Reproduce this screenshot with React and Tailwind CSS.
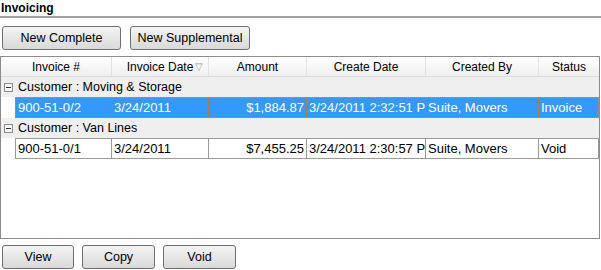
import React from 'react';

const COLS = [
    { key: 'invoice', label: 'Invoice #', w: 'w-[111px]', dw: 'w-[96px]', align: 'text-left' },
    { key: 'date', label: 'Invoice Date', w: 'w-[97px]', dw: 'w-[97px]', align: 'text-left', sort: true },
    { key: 'amount', label: 'Amount', w: 'w-[98px]', dw: 'w-[98px]', align: 'text-right' },
    { key: 'created', label: 'Create Date', w: 'w-[119px]', dw: 'w-[119px]', align: 'text-left' },
    { key: 'by', label: 'Created By', w: 'w-[113px]', dw: 'w-[113px]', align: 'text-left' },
    { key: 'status', label: 'Status', w: 'flex-1', dw: 'flex-1', align: 'text-left' },
];

const GROUPS = [
    {
        name: 'Customer : Moving & Storage',
        rows: [
            { invoice: '900-51-0/2', date: '3/24/2011', amount: '$1,884.87', created: '3/24/2011 2:32:51 PM', by: 'Suite, Movers', status: 'Invoice', selected: true },
        ],
    },
    {
        name: 'Customer : Van Lines',
        rows: [
            { invoice: '900-51-0/1', date: '3/24/2011', amount: '$7,455.25', created: '3/24/2011 2:30:57 PM', by: 'Suite, Movers', status: 'Void' },
        ],
    },
];

function Btn({ children, w }) {
    return (
        <button className={`${w} h-[24px] rounded-[3px] border border-[#707070] bg-gradient-to-b from-[#f4f4f4] to-[#d9d9d9] text-[12.5px] text-black leading-none`}>
            {children}
        </button>
    );
}

export default function App() {
    return (
        <div className="w-[601px] h-[270px] bg-white overflow-hidden text-[12px] text-black" style={{ fontFamily: '"Liberation Sans", Arial, sans-serif' }}>
            {/* title */}
            <div className="h-[16px] pl-[1px] pt-[1px] font-bold leading-[14px]">Invoicing</div>
            <div className="h-[2px] w-[601px] bg-[#a0a0a0]" />

            {/* top buttons */}
            <div className="flex gap-[9px] pl-[2px] mt-[8px]">
                <Btn w="w-[119px]">New Complete</Btn>
                <Btn w="w-[120px]">New Supplemental</Btn>
            </div>

            {/* grid */}
            <div className="mt-[6px] w-[600px] h-[183px] border border-[#8c8c8c] bg-white">
                <div className="flex h-[20px] bg-gradient-to-b from-white to-[#efefef] border-b border-[#dcdcdc]">
                    {COLS.map((c) => (
                        <div key={c.key} className={`${c.w} relative flex items-center justify-center border-r border-[#e2e2e2] last:border-r-0`}>
                            {c.label}
                            {c.sort && <span className="absolute right-[5px] top-[2px] text-[10px] text-[#9a9a9a]">▽</span>}
                        </div>
                    ))}
                </div>

                {GROUPS.map((g) => (
                    <div key={g.name}>
                        <div className="flex items-center h-[20px] bg-[#efefef]">
                            <div className="ml-[3px] w-[9px] h-[9px] border border-[#8a8a8a] bg-white flex items-center justify-center">
                                <div className="w-[5px] h-px bg-[#333]" />
                            </div>
                            <span className="ml-[5px] text-[12.5px]">{g.name}</span>
                        </div>
                        {g.rows.map((r) => (
                            <div
                                key={r.invoice}
                                className={`ml-[14px] flex h-[21px] border border-[#9a9a9a] text-[13px] ${r.selected ? 'bg-[#3399ff] text-white outline-1 outline-dotted outline-[#c8752a] -outline-offset-1' : 'bg-white'}`}
                            >
                                {COLS.map((c) => (
                                    <div
                                        key={c.key}
                                        className={`${c.dw} ${c.align} px-[2px] flex items-center overflow-hidden whitespace-nowrap border-r last:border-r-0 ${r.selected ? 'border-dotted border-[#b07a4a]' : 'border-[#9a9a9a]'} ${c.align === 'text-right' ? 'justify-end' : ''}`}
                                    >
                                        {r[c.key]}
                                    </div>
                                ))}
                            </div>
                        ))}
                    </div>
                ))}
            </div>

            {/* bottom buttons */}
            <div className="flex gap-[8px] pl-[2px] mt-[6px]">
                <Btn w="w-[72px]">View</Btn>
                <Btn w="w-[73px]">Copy</Btn>
                <Btn w="w-[73px]">Void</Btn>
            </div>
        </div>
    );
}
